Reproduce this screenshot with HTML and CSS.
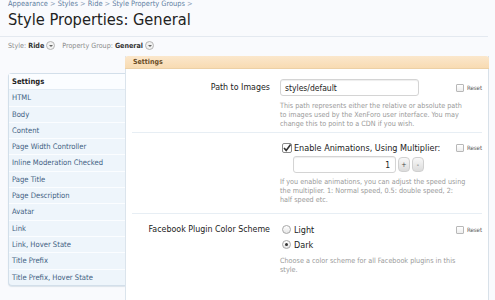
FILE: index.html
```html
<!DOCTYPE html>
<html lang="en">
<head>
    <meta http-equiv="Content-Type" content="text/html; charset=utf-8"/>
    <link rel="stylesheet" href="styles.css">
</head>
<body>
<div class="crumbs">
    <a>Appearance</a> &gt; <a>Styles</a> &gt; <a>Ride</a> &gt; <a>Style Property Groups</a> &gt;
</div>
<h1 class="title">Style Properties: General</h1>
<div class="filters">
    <span class="filter">Style: <b>Ride</b> <span class="drop"></span></span>
    <span class="filter">Property Group: <b>General</b> <span class="drop"></span></span>
</div>

<div class="layout">
    <ul class="side">
        <li class="on">Settings</li>
        <li>HTML</li>
        <li>Body</li>
        <li>Content</li>
        <li>Page Width Controller</li>
        <li>Inline Moderation Checked</li>
        <li>Page Title</li>
        <li>Page Description</li>
        <li>Avatar</li>
        <li>Link</li>
        <li>Link, Hover State</li>
        <li>Title Prefix</li>
        <li>Title Prefix, Hover State</li>
    </ul>

    <div class="panel">
        <div class="panel_head">Settings</div>

        <div class="prop first">
            <div class="prop_label">Path to Images</div>
            <div class="prop_ctrl">
                <div class="line">
                    <input class="text" type="text" value="styles/default">
                    <label class="reset"><span class="box"></span>Reset</label>
                </div>
                <p class="explain">This path represents either the relative or absolute path to images used by the XenForo user interface. You may change this to point to a CDN if you wish.</p>
            </div>
        </div>

        <div class="prop">
            <div class="prop_label"></div>
            <div class="prop_ctrl">
                <div class="line">
                    <span class="check">
                        <svg width="10" height="10" viewBox="0 0 10 10"><rect x="0.5" y="0.5" width="9" height="9" rx="1.5" fill="#fff" stroke="#8a8a8a"/><path d="M2 5 L4.2 7.4 L8.6 1.6" fill="none" stroke="#333" stroke-width="1.6"/></svg>
                    </span>
                    <span class="opt_text">Enable Animations, Using Multiplier:</span>
                    <label class="reset"><span class="box"></span>Reset</label>
                </div>
                <div class="spin">
                    <input class="text num" type="text" value="1">
                    <span class="spin_btn">+</span>
                    <span class="spin_btn">-</span>
                </div>
                <p class="explain">If you enable animations, you can adjust the speed using the multiplier. 1: Normal speed, 0.5: double speed, 2: half speed etc.</p>
            </div>
        </div>

        <div class="prop last">
            <div class="prop_label">Facebook Plugin Color Scheme</div>
            <div class="prop_ctrl">
                <div class="line">
                    <span class="radio"></span><span class="opt_text">Light</span>
                    <label class="reset"><span class="box"></span>Reset</label>
                </div>
                <div class="line">
                    <span class="radio sel"></span><span class="opt_text">Dark</span>
                </div>
                <p class="explain">Choose a color scheme for all Facebook plugins in this style.</p>
            </div>
        </div>
    </div>
</div>
</body>
</html>
```

FILE: styles.css
```css
body {
    margin: 0;
    background: #f9fafd;
    font-family: "DejaVu Sans Condensed", "DejaVu Sans", sans-serif;
    color: #222;
    height: 300px;
    overflow: hidden;
}

.crumbs {
    padding: 0 8px;
    font-size: 7.4px;
    line-height: 8px;
    color: #8aa0b6;
}

.crumbs a {
    color: #5e7ea2;
}

.title {
    margin: 2px 7px 0 0;
    padding: 0 0 6px 8px;
    font-size: 16.3px;
    line-height: 20px;
    font-weight: normal;
    color: #222;
    border-bottom: 1px solid #e4e9f0;
}

.filters {
    padding: 4px 8px 0;
    font-size: 7.1px;
    line-height: 10px;
    color: #8a8a8a;
}

.filter {
    margin-right: 5px;
}

.filter b {
    color: #333;
}

.drop {
    display: inline-block;
    width: 7px;
    height: 7px;
    border: 1px solid #b5b5b5;
    border-radius: 50%;
    background: #f1f1f1;
    vertical-align: -2px;
    position: relative;
}

.drop:after {
    content: "";
    position: absolute;
    left: 1.5px;
    top: 2.5px;
    border-left: 2px solid transparent;
    border-right: 2px solid transparent;
    border-top: 2.5px solid #666;
}

.layout {
    display: flex;
    align-items: flex-start;
    margin-top: 5px;
    padding-left: 8px;
}

.side {
    list-style: none;
    margin: 17px 0 0;
    padding: 0;
    width: 116px;
    background: #eef5fb;
    border: 1px solid #d3dfea;
    border-right: none;
    border-radius: 4px 0 0 4px;
    box-shadow: 0 1px 1px #dbe3ea;
}

.side li {
    height: 15.3px;
    line-height: 15.3px;
    padding-left: 3px;
    font-size: 7.6px;
    color: #3f5f82;
    border-bottom: 1px solid #fbfdff;
    white-space: nowrap;
}

.side li:last-child {
    border-bottom: none;
}

.side li.on {
    background: #fbfdff;
    color: #222;
    font-weight: bold;
    border-bottom-color: #e3ecf4;
}

.panel {
    width: 362px;
    background: #fff;
    border-left: 1px solid #dbe4ec;
    border-right: 1px solid #d8e1e9;
    height: 300px;
}

.panel_head {
    height: 12px;
    line-height: 12px;
    padding-left: 8px;
    font-size: 7px;
    font-weight: bold;
    color: #6b4d26;
    background: linear-gradient(#fbe7cc, #f8dbb2);
    border-bottom: 1px solid #ecd0a6;
    border-radius: 3px 3px 0 0;
    margin-left: -1px;
    margin-right: -1px;
}

.prop {
    display: flex;
    margin: 0 6px;
    padding: 7px 0 9px;
    border-bottom: 1px solid #e7eef4;
}

.prop.first {
    padding-top: 10px;
    padding-bottom: 4px;
}

.prop.first .explain {
    margin-top: 5px;
}

.prop.last {
    border-bottom: none;
    padding-top: 8px;
}

.prop_label {
    width: 138px;
    padding-right: 10px;
    text-align: right;
    font-size: 8.8px;
    line-height: 17px;
    color: #222;
    flex-shrink: 0;
}

.prop.last .prop_label {
    line-height: 15px;
}

.prop_ctrl {
    flex: 1;
}

.line {
    display: flex;
    align-items: center;
    min-height: 15px;
}

.text {
    width: 139px;
    height: 17px;
    box-sizing: border-box;
    border: 1px solid #d4d4d4;
    border-radius: 3px;
    padding: 0 4px;
    font-family: inherit;
    font-size: 8.5px;
    color: #222;
    margin: 0;
    box-shadow: inset 0 1px 1px #eee;
}

.reset {
    margin-left: auto;
    font-size: 6px;
    color: #555;
    display: flex;
    align-items: center;
}

.box {
    display: inline-block;
    width: 6px;
    height: 6px;
    border: 1px solid #b8b8b8;
    border-radius: 1px;
    background: linear-gradient(#fff, #eee);
    margin-right: 3px;
}

.explain {
    margin: 4px 0 0;
    width: 186px;
    font-size: 7.2px;
    line-height: 9px;
    color: #999;
}

.check {
    display: flex;
    margin-left: 2px;
    margin-right: 2px;
}

.opt_text {
    font-size: 9px;
    color: #222;
}

.spin {
    display: flex;
    align-items: center;
    margin: 1px 0 0 13px;
}

.num {
    width: 103px;
    text-align: right;
    padding-right: 5px;
}

.spin_btn {
    width: 12px;
    height: 15px;
    line-height: 14px;
    text-align: center;
    font-size: 7px;
    color: #444;
    background: linear-gradient(#f8f8f8, #dcdcdc);
    border: 1px solid #d0d0d0;
    border-radius: 4px;
    margin-left: 2px;
    box-sizing: border-box;
}

.radio {
    display: inline-block;
    width: 9px;
    height: 9px;
    box-sizing: border-box;
    border: 1px solid #a8a8a8;
    border-radius: 50%;
    background: linear-gradient(#fff, #e6e6e6);
    margin: 0 3px 0 2px;
    position: relative;
}

.radio.sel:after {
    content: "";
    position: absolute;
    left: 2px;
    top: 2px;
    width: 3px;
    height: 3px;
    border-radius: 50%;
    background: #333;
}
```
